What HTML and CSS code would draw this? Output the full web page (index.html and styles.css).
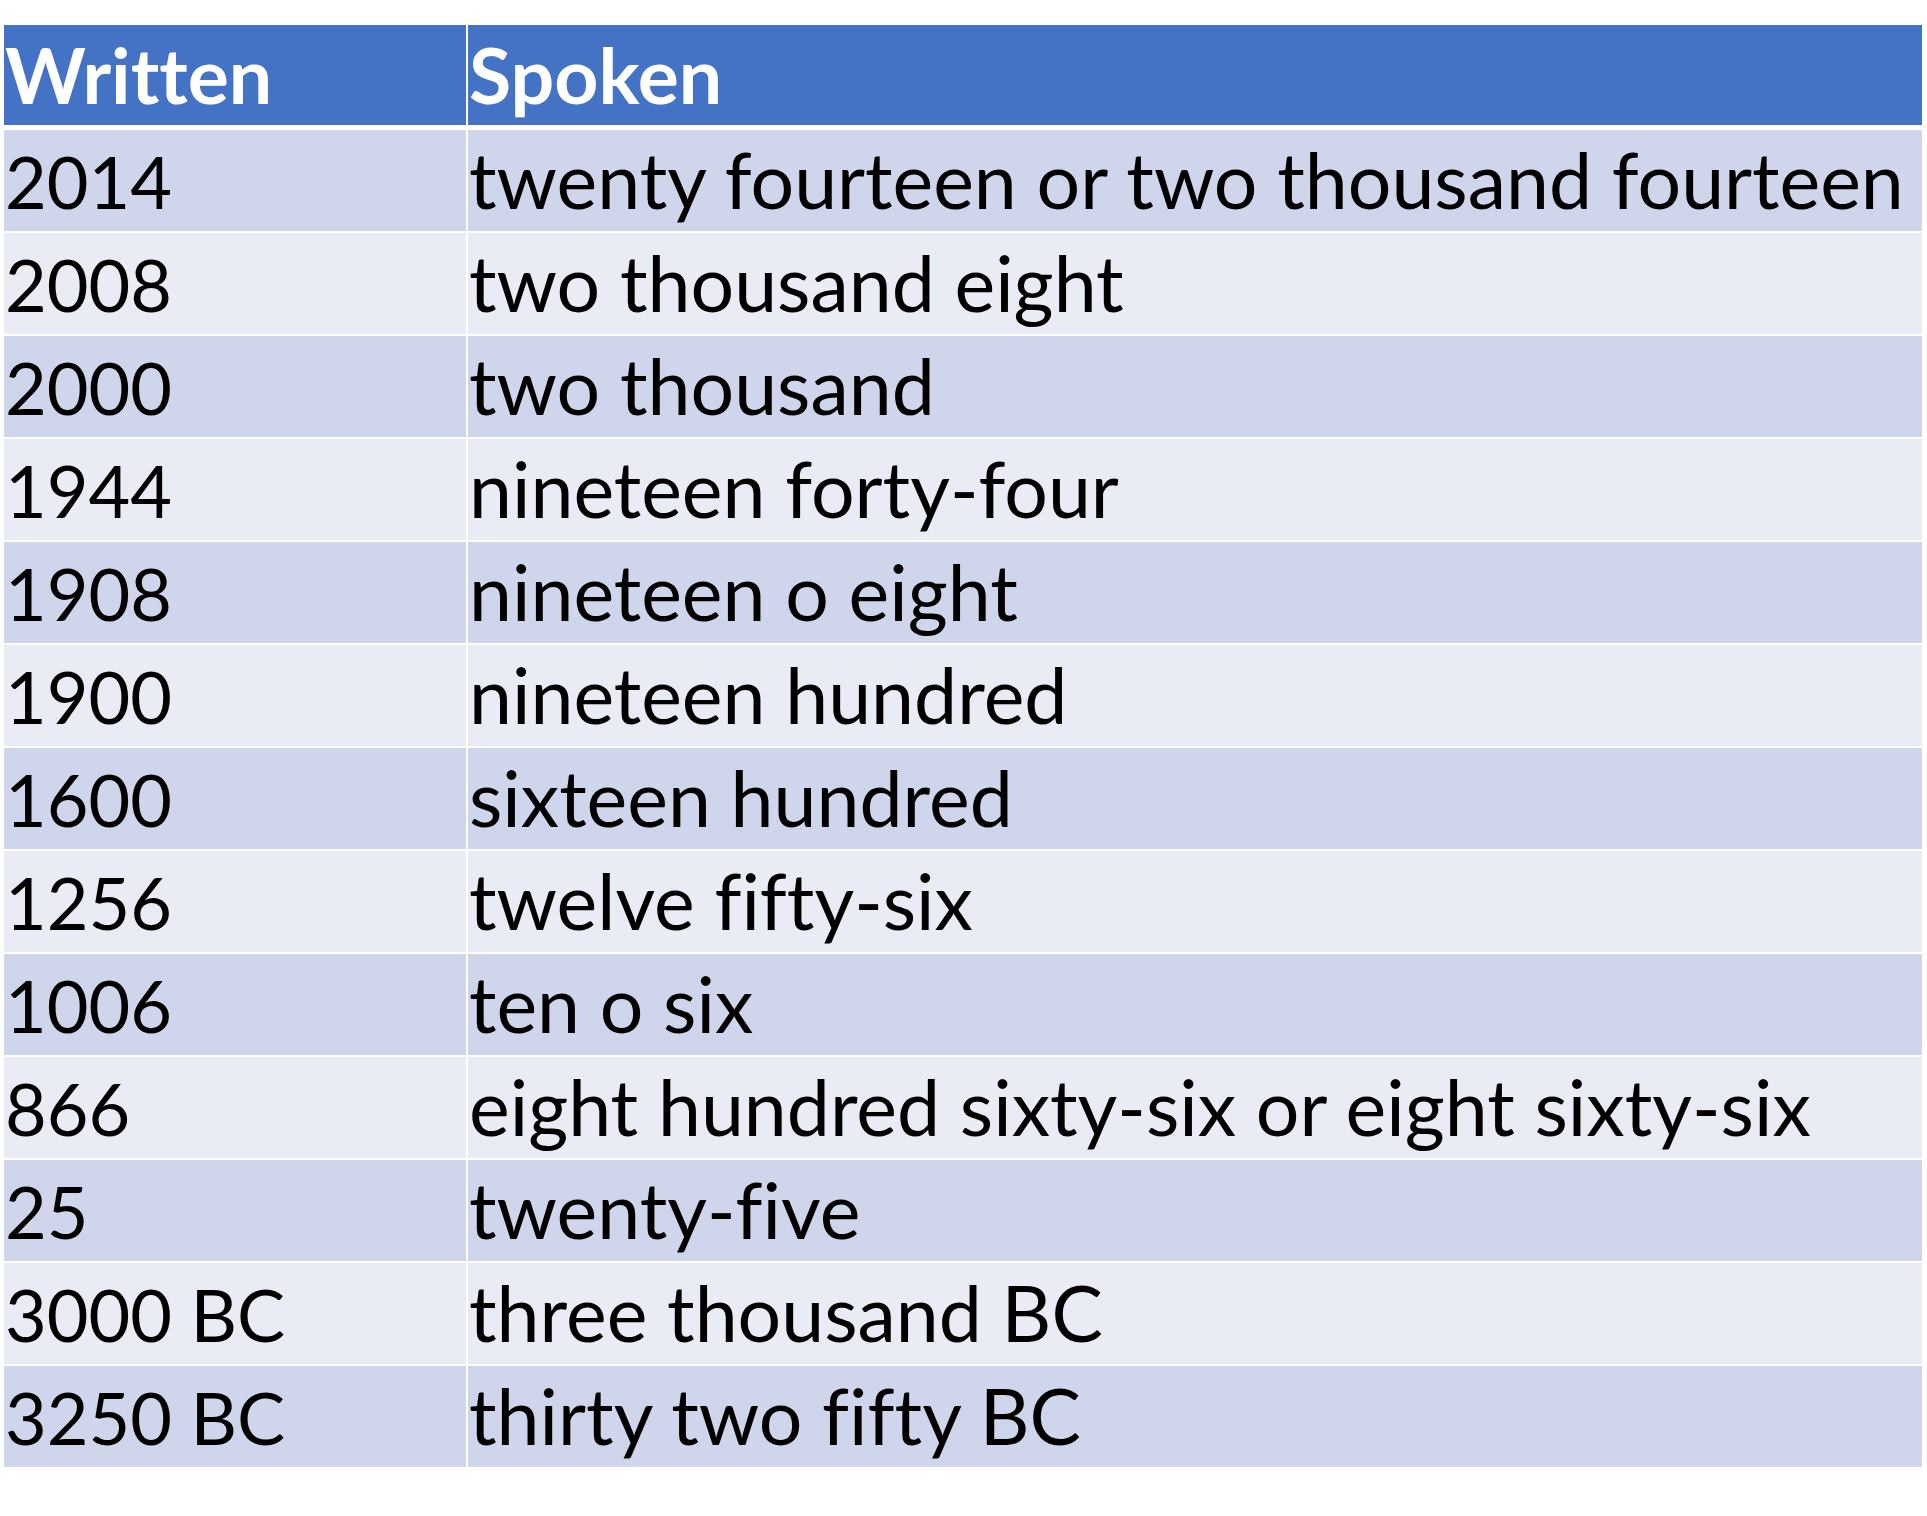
FILE: index.html
```html
<!DOCTYPE html>
<html lang="en">
<head>
<meta charset="utf-8">
<title>Written and spoken years</title>
<link rel="stylesheet" href="styles.css">
</head>
<body>
<div class="table">
  <div class="row head"><div class="cell c1">Written</div><div class="cell c2">Spoken</div></div>
  <div class="row odd"><div class="cell c1">2014</div><div class="cell c2">twenty fourteen or two thousand fourteen</div></div>
  <div class="row even"><div class="cell c1">2008</div><div class="cell c2">two thousand eight</div></div>
  <div class="row odd"><div class="cell c1">2000</div><div class="cell c2">two thousand</div></div>
  <div class="row even"><div class="cell c1">1944</div><div class="cell c2">nineteen forty-four</div></div>
  <div class="row odd"><div class="cell c1">1908</div><div class="cell c2">nineteen o eight</div></div>
  <div class="row even"><div class="cell c1">1900</div><div class="cell c2">nineteen hundred</div></div>
  <div class="row odd"><div class="cell c1">1600</div><div class="cell c2">sixteen hundred</div></div>
  <div class="row even"><div class="cell c1">1256</div><div class="cell c2">twelve fifty-six</div></div>
  <div class="row odd"><div class="cell c1">1006</div><div class="cell c2">ten o six</div></div>
  <div class="row even"><div class="cell c1">866</div><div class="cell c2">eight hundred sixty-six or eight sixty-six</div></div>
  <div class="row odd"><div class="cell c1">25</div><div class="cell c2">twenty-five</div></div>
  <div class="row even"><div class="cell c1">3000 BC</div><div class="cell c2">three thousand BC</div></div>
  <div class="row odd"><div class="cell c1">3250 BC</div><div class="cell c2">thirty two fifty BC</div></div>
</div>
</body>
</html>
```
FILE: styles.css
```css
html, body {
  margin: 0;
  padding: 0;
  background: #ffffff;
}
body {
  font-family: "Lato", "Liberation Sans", sans-serif;
  color: #000000;
  font-variant-ligatures: none;
}
.table {
  margin: 25px 0 0 4px;
  width: 1918px;
  display: flex;
  flex-direction: column;
  gap: 2px;
}
.row {
  display: grid;
  grid-template-columns: 462px 1fr;
  column-gap: 2px;
  height: 101px;
}
.row.head {
  height: 100px;
  margin-bottom: 3px;
}
.cell {
  line-height: 83px;
  padding-left: 1px;
  white-space: nowrap;
  overflow: hidden;
}
.c1 {
  font-size: 72px;
  padding-top: 10px;
}
.c2 {
  font-size: 77px;
  padding-top: 8px;
}
.head .cell {
  background: #4472c4;
  color: #ffffff;
  font-weight: 700;
  font-size: 77px;
  padding-top: 8px;
}
.odd .cell {
  background: #cfd5ea;
}
.even .cell {
  background: #e9ebf5;
}
```
